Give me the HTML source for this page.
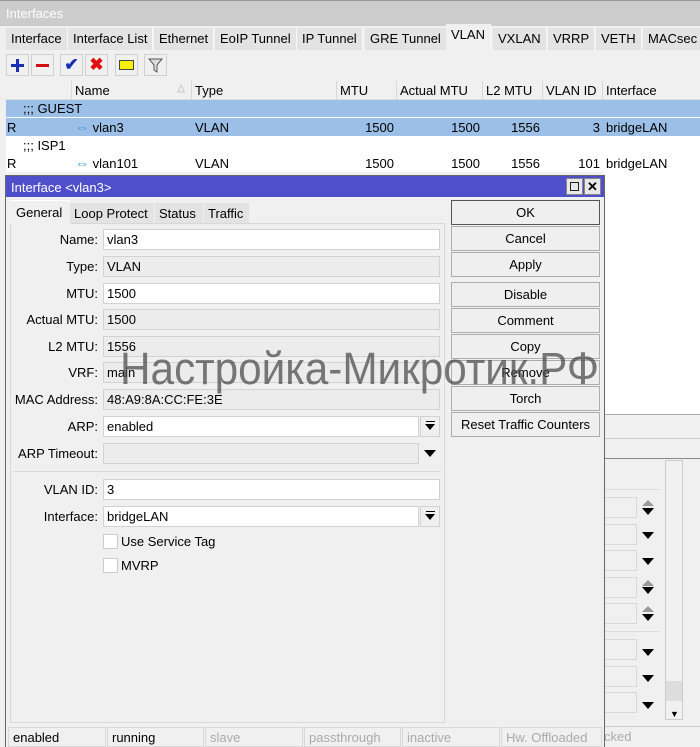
<!DOCTYPE html>
<html><head><meta charset="utf-8"><style>
*{box-sizing:border-box;margin:0;padding:0}
body{width:700px;height:747px;overflow:hidden;background:#f0f0f0;font-family:"Liberation Sans",sans-serif;font-size:13px;color:#000;position:relative}
.a{position:absolute}
.tab{position:absolute;top:28px;height:22px;background:#e3e3e3;border-right:1px solid #f8f8f8;padding:3px 5px 0;white-space:nowrap}
.tb{position:absolute;top:54px;width:23px;height:22px;border:1px solid #d0d0d0;background:#f0f0f0}
.th{position:absolute;top:81px;height:19px;border-right:1px solid #d8d8d8;padding:2px 3px 0}
.cell{position:absolute;padding:2px 3px 0;white-space:nowrap}
.lbl{position:absolute;right:602px;text-align:right;white-space:nowrap}
.in{position:absolute;left:103px;height:21px;border:1px solid #d2d2d2;padding:2px 3px 0;white-space:nowrap}
.w{background:#fff}
.g{background:#ececec}
.btn{position:absolute;left:451px;width:149px;height:25px;border:1px solid #adadad;background:#efefef;text-align:center;padding-top:4px}
.st{position:absolute;top:727px;height:20px;border:1px solid #d8d8d8;padding:2px 4px 0}
.dd{position:absolute;width:20px;height:21px;border:1px solid #d2d2d2;background:#efefef}
.arr{position:absolute;width:0;height:0;border-left:6px solid transparent;border-right:6px solid transparent;border-top:7px solid #000}
.rin{position:absolute;left:604px;width:33px;height:21px;border:1px solid #d8d8d8;border-left:none;background:#f0f0f0}
.ic{color:#3a9be0;font-size:14px;font-weight:bold}
</style></head><body>
<div class="a" style="left:0;top:0;width:700px;height:26px;background:#cccccc;border-top:1px solid #999"></div>
<div class="a" style="left:6px;top:6px;color:#fff;font-size:13px">Interfaces</div>
<div class="tab" style="left:6px">Interface</div>
<div class="tab" style="left:68px">Interface List</div>
<div class="tab" style="left:154px">Ethernet</div>
<div class="tab" style="left:215px">EoIP Tunnel</div>
<div class="tab" style="left:297px">IP Tunnel</div>
<div class="tab" style="left:365px">GRE Tunnel</div>
<div class="tab" style="left:446px;top:24px;height:27px;background:#f0f0f0">VLAN</div>
<div class="tab" style="left:493px">VXLAN</div>
<div class="tab" style="left:548px">VRRP</div>
<div class="tab" style="left:596px">VETH</div>
<div class="tab" style="left:643px">MACsec</div>
<div class="tb" style="left:6px"><div class="a" style="left:4px;top:9px;width:13px;height:3px;background:#1a2fb8"></div><div class="a" style="left:9px;top:4px;width:3px;height:13px;background:#1a2fb8"></div></div>
<div class="tb" style="left:31px"><div class="a" style="left:4px;top:9px;width:13px;height:3px;background:#d01010"></div></div>
<div class="tb" style="left:60px;color:#1a2fb8;font-size:17px;font-weight:bold;text-align:center;line-height:20px">✔</div>
<div class="tb" style="left:85px;color:#e01010;font-size:17px;font-weight:bold;text-align:center;line-height:20px">✖</div>
<div class="tb" style="left:115px"><div class="a" style="left:3px;top:5px;width:15px;height:10px;background:#f5ef00;border:1px solid #444"></div></div>
<div class="tb" style="left:144px"><svg width="21" height="20"><path d="M4 4h13l-5 6v7l-3-2v-5z" fill="#ddd" stroke="#555"/></svg></div>
<div class="a" style="left:6px;top:80px;width:694px;height:92px;background:#fff"></div>
<div class="a" style="left:6px;top:80px;width:694px;height:20px;background:#f0f0f0;border-bottom:1px solid #ddd"></div>
<div class="th" style="left:6px;width:66px"></div>
<div class="th" style="left:72px;width:120px">Name<span style="position:absolute;right:6px;color:#aaa;font-size:10px">△</span></div>
<div class="th" style="left:192px;width:145px">Type</div>
<div class="th" style="left:337px;width:60px">MTU</div>
<div class="th" style="left:397px;width:86px">Actual MTU</div>
<div class="th" style="left:483px;width:60px">L2 MTU</div>
<div class="th" style="left:543px;width:60px">VLAN ID</div>
<div class="th" style="left:603px;width:97px;border:none">Interface</div>
<div class="a" style="left:6px;top:100px;width:694px;height:17px;background:#9cbfe7"></div>
<div class="a" style="left:6px;top:118px;width:694px;height:18px;background:#9cbfe7"></div>
<div class="cell" style="left:20px;top:99px">;;; GUEST</div>
<div class="cell" style="left:4px;top:118px">R</div>
<div class="cell" style="left:72px;top:117px"><span class="ic">⇔</span> vlan3</div>
<div class="cell" style="left:192px;top:118px">VLAN</div>
<div class="cell" style="left:337px;top:118px;width:60px;text-align:right">1500</div>
<div class="cell" style="left:397px;top:118px;width:86px;text-align:right">1500</div>
<div class="cell" style="left:483px;top:118px;width:60px;text-align:right">1556</div>
<div class="cell" style="left:543px;top:118px;width:60px;text-align:right">3</div>
<div class="cell" style="left:603px;top:118px">bridgeLAN</div>
<div class="cell" style="left:20px;top:136px">;;; ISP1</div>
<div class="cell" style="left:4px;top:154px">R</div>
<div class="cell" style="left:72px;top:153px"><span class="ic">⇔</span> vlan101</div>
<div class="cell" style="left:192px;top:154px">VLAN</div>
<div class="cell" style="left:337px;top:154px;width:60px;text-align:right">1500</div>
<div class="cell" style="left:397px;top:154px;width:86px;text-align:right">1500</div>
<div class="cell" style="left:483px;top:154px;width:60px;text-align:right">1556</div>
<div class="cell" style="left:543px;top:154px;width:60px;text-align:right">101</div>
<div class="cell" style="left:603px;top:154px">bridgeLAN</div>
<div class="a" style="left:604px;top:172px;width:96px;height:243px;background:#fff"></div>
<div class="a" style="left:604px;top:414px;width:96px;height:1px;background:#aaa"></div>
<div class="a" style="left:604px;top:438px;width:96px;height:1px;background:#ccc"></div>
<div class="a" style="left:604px;top:458px;width:96px;height:1px;background:#888"></div>
<div class="a" style="left:604px;top:489px;width:56px;height:1px;background:#ddd"></div>
<div class="a" style="left:604px;top:631px;width:56px;height:1px;background:#ddd"></div>
<div class="rin" style="top:497px"></div><div class="rin" style="top:524px"></div><div class="rin" style="top:550px"></div><div class="rin" style="top:577px"></div><div class="rin" style="top:603px"></div>
<div class="rin" style="top:639px"></div><div class="rin" style="top:666px"></div><div class="rin" style="top:692px"></div>
<div class="arr" style="left:642px;top:508px"></div><div class="a" style="left:642px;top:500px;width:0;height:0;border-left:6px solid transparent;border-right:6px solid transparent;border-bottom:6px solid #999"></div>
<div class="arr" style="left:642px;top:532px"></div>
<div class="arr" style="left:642px;top:558px"></div>
<div class="arr" style="left:642px;top:587px"></div><div class="a" style="left:642px;top:580px;width:0;height:0;border-left:6px solid transparent;border-right:6px solid transparent;border-bottom:6px solid #999"></div>
<div class="arr" style="left:642px;top:614px"></div><div class="a" style="left:642px;top:606px;width:0;height:0;border-left:6px solid transparent;border-right:6px solid transparent;border-bottom:6px solid #999"></div>
<div class="arr" style="left:642px;top:649px"></div><div class="arr" style="left:642px;top:675px"></div><div class="arr" style="left:642px;top:702px"></div>
<div class="a" style="left:665px;top:460px;width:18px;height:260px;border:1px solid #ccc;background:#f0f0f0"></div>
<div class="a" style="left:666px;top:681px;width:16px;height:20px;background:#ddd"></div>
<div class="a" style="left:670px;top:709px;font-size:9px">▼</div>
<div class="a" style="left:604px;top:726px;width:96px;height:1px;background:#ccc"></div>
<div class="a" style="left:604px;top:729px;color:#aaa">cked</div>
<div class="a" style="left:5px;top:175px;width:600px;height:572px;background:#f0f0f0;border:1px solid #666;border-bottom:none"></div>
<div class="a" style="left:6px;top:176px;width:598px;height:21px;background:#4f4fcc"></div>
<div class="a" style="left:11px;top:180px;color:#fff">Interface &lt;vlan3&gt;</div>
<div class="a" style="left:566px;top:178px;width:17px;height:17px;background:#e8e8e8;border:1px solid #888"><div class="a" style="left:3px;top:3px;width:9px;height:9px;border:1px solid #222"></div></div>
<div class="a" style="left:584px;top:178px;width:17px;height:17px;background:#e8e8e8;border:1px solid #888;text-align:center;font-size:13px;line-height:15px;font-weight:bold">✕</div>
<div class="a" style="left:10px;top:223px;width:435px;height:500px;border:1px solid #d8d8d8"></div>
<div class="a" style="left:10px;top:200px;width:60px;height:24px;background:#f0f0f0;padding:4px 0 0 6px;border-top:1px solid #fff">General</div>
<div class="a" style="left:70px;top:203px;width:84px;height:20px;background:#e3e3e3;padding:3px 0 0 4px">Loop Protect</div>
<div class="a" style="left:155px;top:203px;width:48px;height:20px;background:#e3e3e3;padding:3px 0 0 4px">Status</div>
<div class="a" style="left:204px;top:203px;width:45px;height:20px;background:#e3e3e3;padding:3px 0 0 4px">Traffic</div>
<div class="lbl" style="top:232px">Name:</div><div class="in w" style="top:229px;width:337px">vlan3</div>
<div class="lbl" style="top:259px">Type:</div><div class="in g" style="top:256px;width:337px">VLAN</div>
<div class="lbl" style="top:286px">MTU:</div><div class="in w" style="top:283px;width:337px">1500</div>
<div class="lbl" style="top:312px">Actual MTU:</div><div class="in g" style="top:309px;width:337px">1500</div>
<div class="lbl" style="top:339px">L2 MTU:</div><div class="in g" style="top:336px;width:337px">1556</div>
<div class="lbl" style="top:365px">VRF:</div><div class="in g" style="top:362px;width:337px">main</div>
<div class="lbl" style="top:392px">MAC Address:</div><div class="in g" style="top:389px;width:337px">48:A9:8A:CC:FE:3E</div>
<div class="lbl" style="top:419px">ARP:</div><div class="in w" style="top:416px;width:316px">enabled</div><div class="dd" style="left:420px;top:416px"><div class="a" style="left:5px;top:4px;width:9px;height:1px;background:#000"></div><div class="arr" style="left:4px;top:7px;border-left-width:5px;border-right-width:5px;border-top-width:6px"></div></div>
<div class="lbl" style="top:446px">ARP Timeout:</div><div class="in g" style="top:443px;width:316px"></div><div class="arr" style="left:424px;top:450px"></div>
<div class="a" style="left:13px;top:471px;width:428px;height:1px;background:#d8d8d8"></div>
<div class="lbl" style="top:482px">VLAN ID:</div><div class="in w" style="top:479px;width:337px">3</div>
<div class="lbl" style="top:509px">Interface:</div><div class="in w" style="top:506px;width:316px">bridgeLAN</div><div class="dd" style="left:420px;top:506px"><div class="a" style="left:5px;top:4px;width:9px;height:1px;background:#000"></div><div class="arr" style="left:4px;top:7px;border-left-width:5px;border-right-width:5px;border-top-width:6px"></div></div>
<div class="a" style="left:103px;top:534px;width:15px;height:15px;background:#fff;border:1px solid #ccc"></div><div class="a" style="left:121px;top:534px">Use Service Tag</div>
<div class="a" style="left:103px;top:558px;width:15px;height:15px;background:#fff;border:1px solid #ccc"></div><div class="a" style="left:121px;top:558px">MVRP</div>
<div class="btn" style="top:200px;border-color:#555">OK</div>
<div class="btn" style="top:226px">Cancel</div>
<div class="btn" style="top:252px">Apply</div>
<div class="btn" style="top:282px">Disable</div>
<div class="btn" style="top:308px">Comment</div>
<div class="btn" style="top:334px">Copy</div>
<div class="btn" style="top:360px">Remove</div>
<div class="btn" style="top:386px">Torch</div>
<div class="btn" style="top:412px">Reset Traffic Counters</div>
<div class="st" style="left:8px;width:98px">enabled</div>
<div class="st" style="left:107px;width:97px">running</div>
<div class="st" style="left:205px;width:98px;color:#aaa">slave</div>
<div class="st" style="left:304px;width:97px;color:#aaa">passthrough</div>
<div class="st" style="left:402px;width:98px;color:#aaa">inactive</div>
<div class="st" style="left:501px;width:101px;color:#aaa">Hw. Offloaded</div>
<div class="a" style="left:120px;top:343px;font-family:'Liberation Sans',sans-serif;font-size:45px;color:rgba(70,70,70,0.72);white-space:nowrap;line-height:52px;transform:scaleX(0.94);transform-origin:0 0">Настройка-Микротик.РФ</div>
</body></html>
